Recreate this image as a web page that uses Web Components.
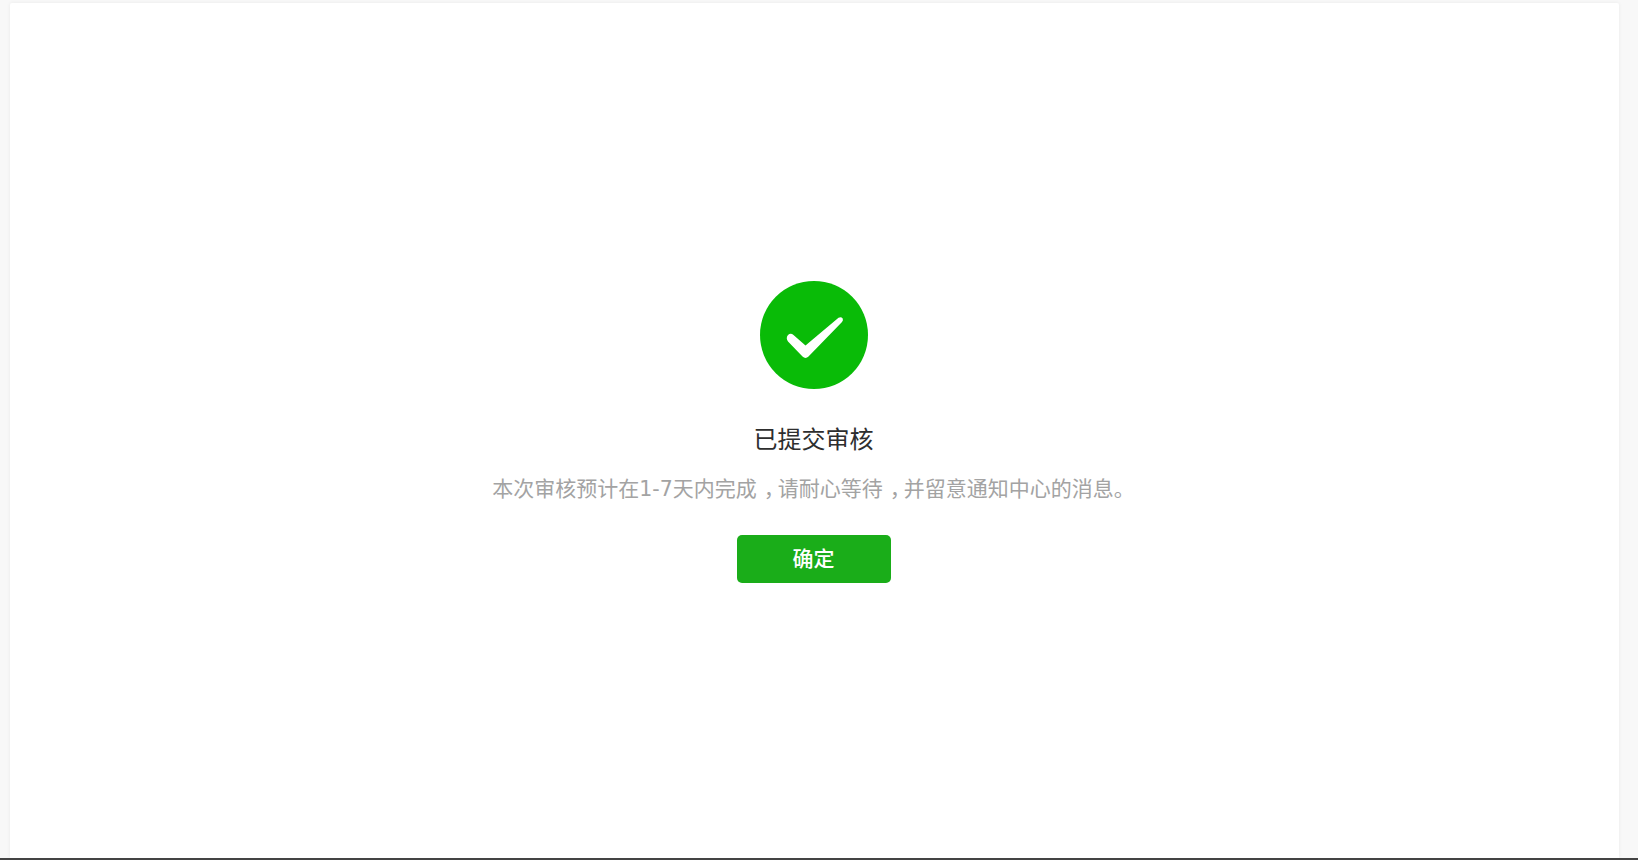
<!DOCTYPE html>
<html lang="zh">
<head>
<meta charset="utf-8">
<title>已提交审核</title>
<style>
  html, body { margin: 0; height: 100%; }
  body { background: #f8f8f8; overflow: hidden; }
</style>
</head>
<body>
<x-page>
  <x-result heading="已提交审核">
    本次审核预计在<x-num>1-7</x-num>天内完成<x-comma>，</x-comma>请耐心等待<x-comma>，</x-comma>并留意通知中心的消息。
    <x-button slot="action">确定</x-button>
  </x-result>
</x-page>

<script>
class Page extends HTMLElement {
  constructor() {
    super();
    this.attachShadow({ mode: "open" }).innerHTML = `
      <style>
        :host {
          display: flex;
          flex-direction: column;
          height: 860px;
          box-sizing: border-box;
          font-family: "Liberation Sans", "Noto Sans CJK SC", sans-serif;
        }
        .card {
          flex: 1;
          display: flex;
          margin: 3px 19px 0 10px;
          background: #fff;
          box-shadow: 0 0 4px rgba(0,0,0,.06);
          border-radius: 2px 2px 0 0;
        }
        .bar { height: 2px; background: #444; }
      </style>
      <div class="card"><slot></slot></div>
      <div class="bar"></div>`;
  }
}

class Result extends HTMLElement {
  constructor() {
    super();
    this.attachShadow({ mode: "open" }).innerHTML = `
      <style>
        :host {
          flex: 1;
          display: flex;
          flex-direction: column;
          align-items: center;
          padding: 278px 2px 0 0;
        }
        svg { width: 108px; height: 108px; display: block; }
        h2 {
          margin: 33px 0 0;
          font-size: 24px;
          line-height: 36px;
          font-weight: 400;
          color: #2e2e2e;
        }
        p {
          margin: 15px 0 0;
          font-size: 21px;
          line-height: 32px;
          color: #a3a3a3;
        }
        .action { margin-top: 30px; }
      </style>
      <svg viewBox="0 0 108 108">
        <circle cx="54" cy="54" r="54" fill="#09bb07"/>
        <path d="M28 54 Q30.5 51.5 33.5 54 L45.5 64.5 L78.5 36.8 Q81 35.3 82.6 37.2 Q83.6 39.2 82 41 L48.5 75.5 Q45.5 78.4 42.5 75.5 L28 60.5 Q25.5 57 28 54 Z" fill="#fff"/>
      </svg>
      <h2></h2>
      <p><slot></slot></p>
      <div class="action"><slot name="action"></slot></div>`;
  }
  connectedCallback() {
    this.shadowRoot.querySelector("h2").textContent = this.getAttribute("heading");
  }
}

// the digits in the sentence run wider than Liberation's
class Num extends HTMLElement {
  constructor() {
    super();
    this.attachShadow({ mode: "open" }).innerHTML =
      `<style>:host { font-family: "DejaVu Sans", sans-serif; font-size: 20.5px; }</style><slot></slot>`;
  }
}

// half-width comma with margins, so it sits in the middle of a full em
class Comma extends HTMLElement {
  constructor() {
    super();
    this.attachShadow({ mode: "open" }).innerHTML =
      `<style>:host { font-feature-settings: "halt"; margin-left: 7px; margin-right: 3.5px; }</style><slot></slot>`;
  }
}

class Button extends HTMLElement {
  constructor() {
    super();
    this.attachShadow({ mode: "open" }).innerHTML = `
      <style>
        :host {
          display: block;
          width: 154px;
          height: 48px;
          line-height: 48px;
          text-align: center;
          font-size: 21px;
          font-weight: 500;
          color: #fff;
          background: #1aad19;
          border-radius: 5px;
          cursor: pointer;
        }
      </style>
      <slot></slot>`;
  }
}

customElements.define("x-page", Page);
customElements.define("x-result", Result);
customElements.define("x-num", Num);
customElements.define("x-comma", Comma);
customElements.define("x-button", Button);
</script>
</body>
</html>
